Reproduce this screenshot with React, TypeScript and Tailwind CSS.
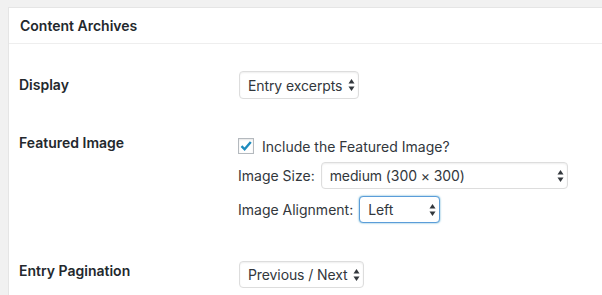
const Arrows = () => (
  <svg width="7" height="13" viewBox="0 0 7 13" className="pointer-events-none absolute right-[4px] top-1/2 -translate-y-1/2">
    <path d="M3.5 0.5 L6.5 5 L0.5 5 Z" fill="#32373c" />
    <path d="M3.5 12.5 L6.5 8 L0.5 8 Z" fill="#32373c" />
  </svg>
);

const Select = ({
  value,
  options,
  className,
  focused = false,
}: {
  value: string;
  options: string[];
  className: string;
  focused?: boolean;
}) => (
  <div className={`relative ${className}`}>
    <select
      defaultValue={value}
      className={`h-full w-full appearance-none rounded-[4px] border bg-white pl-[8px] pr-[6px] text-[14px] tracking-[-0.1px] text-[#32373c] outline-none ${
        focused
          ? "border-[#5b9dd9] shadow-[0_0_2px_rgba(30,140,190,0.8)]"
          : "border-[#dddddd] shadow-[inset_0_1px_2px_rgba(0,0,0,0.07)]"
      }`}
    >
      {options.map((o) => (
        <option key={o}>{o}</option>
      ))}
    </select>
    <Arrows />
  </div>
);

const Label = ({ children, className = "pt-[20px]" }: { children: string; className?: string }) => (
  <div className={`w-[220px] shrink-0 text-[14px] font-semibold leading-[18px] text-[#23282d] ${className}`}>
    {children}
  </div>
);

export default function App() {
  return (
    <div
      className="min-h-[295px] w-[602px] overflow-hidden bg-[#f1f1f1] pl-[8px] pt-[7px]"
      style={{ fontFamily: 'Inter, "Liberation Sans", Arial, sans-serif' }}
    >
      <div className="w-[620px] border border-[#e5e5e5] bg-white">
        <div className="flex h-[36px] items-center border-b border-[#eeeeee] px-[11px] text-[14px] font-semibold text-[#23282d]">
          Content Archives
        </div>

        <div className="px-[10px] pt-[12px] text-[#23282d]">
          {/* Display */}
          <div className="flex">
            <Label>Display</Label>
            <div className="py-[15px]">
              <Select value="Entry excerpts" options={["Entry excerpts", "Entry content"]} className="h-[28px] w-[120px]" />
            </div>
          </div>

          {/* Featured Image */}
          <div className="flex">
            <Label>Featured Image</Label>
            <div className="flex flex-col pb-[23px] pt-[15px] text-[14px]">
              <label className="-ml-px flex h-[33px] items-center gap-[8px] pt-px">
                <span className="flex size-[16px] items-center justify-center border border-[#b4b9be] bg-white shadow-[inset_0_1px_2px_rgba(0,0,0,0.1)]">
                  <svg width="14" height="14" viewBox="0 0 14 14">
                    <path d="M2.5 7.2 L5.6 10.3 L11.8 3" fill="none" stroke="#1e8cbe" strokeWidth="2.4" strokeLinejoin="miter" />
                  </svg>
                </span>
                <span className="text-[#32373c]">Include the Featured Image?</span>
              </label>
              <div className="-ml-px flex h-[27px] items-center gap-[6px]">
                <span className="text-[#32373c]">Image Size:</span>
                <Select value="medium (300 × 300)" options={["medium (300 × 300)", "thumbnail (150 × 150)"]} className="h-[27px] w-[247px]" />
              </div>
              <div className="-ml-px mt-[7px] flex h-[27px] items-center gap-[6px]">
                <span className="text-[#32373c]">Image Alignment:</span>
                <Select value="Left" options={["Left", "Right", "None"]} className="h-[27px] w-[81px]" focused />
              </div>
            </div>
          </div>

          {/* Entry Pagination */}
          <div className="flex">
            <Label className="pt-[16px]">Entry Pagination</Label>
            <div className="py-[15px]">
              <Select value="Previous / Next" options={["Previous / Next", "Numeric"]} className="h-[27px] w-[125px]" />
            </div>
          </div>
        </div>
      </div>
    </div>
  );
}
